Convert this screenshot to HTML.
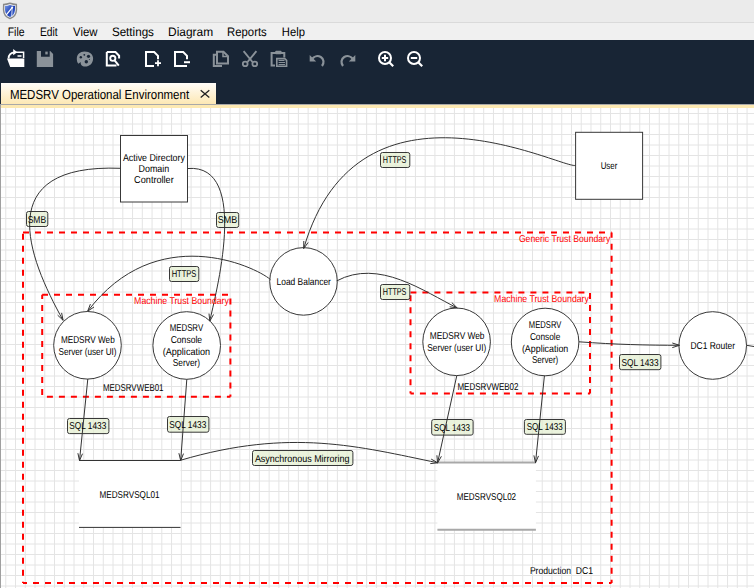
<!DOCTYPE html>
<html><head><meta charset="utf-8">
<style>
html,body{margin:0;padding:0;width:754px;height:588px;overflow:hidden;background:#fff;font-family:"Liberation Sans", sans-serif;}
.abs{position:absolute;}
#title{left:0;top:0;width:754px;height:22px;background:#ebebeb;}
#sep{left:0;top:22px;width:754px;height:1px;background:#dadada;}
#menu{left:0;top:23px;width:754px;height:17px;background:#f0f0f0;}
.mi{position:absolute;top:24px;font-size:12.2px;color:#000;line-height:14px;white-space:nowrap;}
#tool{left:0;top:40px;width:754px;height:64px;background:#182535;}
#tab{left:1px;top:83px;width:215px;height:21px;background:linear-gradient(#fffdf9,#fde8b4);}
#tabtxt{left:9.5px;top:86px;font-size:13.3px;color:#000;white-space:nowrap;line-height:16px;}
#gl{left:0;top:104px;width:754px;height:1px;background:#a9a9a9;}
#yb{left:0;top:105px;width:754px;height:3px;background:#fde9b2;}
#lb{left:0;top:104px;width:1px;height:484px;background:#a0a0a0;}
svg text{font-family:"Liberation Sans", sans-serif;text-rendering:geometricPrecision;}
.t{font-size:10px;fill:#000;}
.mt{font-size:12.3px;fill:#000;}
.tt{font-size:13.2px;fill:#000;}
.tr{font-size:10px;fill:#ff0000;}
.tb{fill:none;stroke:#ff0000;stroke-width:2;stroke-dasharray:6 6;}
.ln{fill:none;stroke:#333;stroke-width:1;}
.ar{fill:none;stroke:#333;stroke-width:1;}
.ent{fill:#fff;stroke:#383838;stroke-width:1;}
.lb{fill:rgba(226,238,206,0.7);stroke:#383838;stroke-width:1;}
</style></head><body>
<div id="title" class="abs"></div>
<svg class="abs" style="left:0;top:0" width="22" height="22" viewBox="0 0 22 22">
<defs><linearGradient id="shg" x1="0" y1="0" x2="1" y2="1"><stop offset="0" stop-color="#7a9be8"/><stop offset="0.55" stop-color="#1d3fb5"/><stop offset="1" stop-color="#5a7fd8"/></linearGradient></defs>
<path d="M10 3.2 C12 3.9 14.3 4.4 16.3 4.4 L16.4 10 C16.2 14.3 13.5 17.4 10 18.5 C6.5 17.4 3.8 14.3 3.6 10 L3.7 4.4 C5.7 4.4 8 3.9 10 3.2 Z" fill="#fff" stroke="#8a8a8a" stroke-width="1.5"/>
<path d="M10 4.9 C11.8 5.5 13.6 5.8 15 5.8 L15 10 C14.8 13.5 12.8 16 10 17 C7.2 16 5.2 13.5 5 10 L5 5.8 C6.4 5.8 8.2 5.5 10 4.9 Z" fill="url(#shg)"/>
<path d="M6.3 14.8 L12.4 7.4" stroke="#fff" stroke-width="1.3"/><path d="M12.2 7.8 L11.7 16.3" stroke="#dfe6f5" stroke-width="0.9"/>
<circle cx="12.2" cy="7.6" r="1" fill="#fff"/>
</svg>
<div id="sep" class="abs"></div>
<div id="menu" class="abs"></div>
<div id="tool" class="abs"></div>
<svg class="abs" style="left:0;top:0" width="754" height="104">
<!-- open -->
<path d="M7 58.6 H24.3 V67 H10.2 Z" fill="#fff"/>
<path d="M16 52.2 H23.6 V58" stroke="#fff" stroke-width="1.5" fill="none"/>
<path d="M17.5 56 H21.5" stroke="#fff" stroke-width="1.5"/>
<path d="M8.6 58.5 C8.6 54.5 10.5 52.5 15 52.3" stroke="#fff" stroke-width="1.8" fill="none"/>
<path d="M13.2 49 L17.2 52.3 L13.2 55.3 Z" fill="#fff"/>
<!-- save -->
<path d="M36.8 51 H50.2 L53.1 54 V67 H36.8 Z M41 51 V56.7 H49.7 V51 Z" fill="#8a9299" fill-rule="evenodd"/>
<rect x="45.3" y="51.6" width="2.4" height="2.8" fill="#8a9299"/>
<!-- palette -->
<path d="M84.5 51.5 C90 51.5 93.1 54.5 93.1 58.5 C93.1 63.5 89.5 66.6 85 66.6 C82 66.6 80.2 64.5 80.8 62 L78.3 63.8 C77 62.3 76.8 60 76.8 58.8 C76.8 54.5 80 51.5 84.5 51.5 Z" fill="#8a9299"/>
<circle cx="80.8" cy="57.2" r="1.2" fill="#182535"/><circle cx="84.3" cy="54.8" r="0.9" fill="#182535"/>
<circle cx="88.5" cy="56.3" r="1.6" fill="#182535"/><circle cx="86.3" cy="61.8" r="1.7" fill="#182535"/>
<circle cx="89.4" cy="59.5" r="0.5" fill="#182535"/>
<!-- report -->
<path d="M106.8 52.1 H115.5 L119.1 55.7 V58.5 M106.8 52.1 V65.6 H116.5" stroke="#fff" stroke-width="2" fill="none"/>
<circle cx="112.8" cy="58.3" r="2.6" stroke="#fff" stroke-width="1.9" fill="none"/>
<path d="M114.8 60.6 L118.8 65.6" stroke="#fff" stroke-width="2"/>
<!-- new -->
<path d="M154 66 H146 V52 H154.2 L158 55.8 V59.3" stroke="#fff" stroke-width="2" fill="none"/>
<path d="M155 63.2 H161 M158 60.3 V66.3" stroke="#fff" stroke-width="1.8"/>
<!-- remove -->
<path d="M187 66 H175 V52 H183.2 L187 55.8 V59.2" stroke="#fff" stroke-width="2" fill="none"/>
<path d="M184 62.2 H190" stroke="#fff" stroke-width="2"/>
<!-- copy -->
<path d="M222 66 H213.8 V54.8 H216.5" stroke="#8a9299" stroke-width="2" fill="none"/>
<path d="M217 51.7 H223.5 L228 56.2 V63.5 H217 Z" stroke="#8a9299" stroke-width="2" fill="none"/>
<path d="M223 52 V56.5 H227.5" stroke="#8a9299" stroke-width="1.5" fill="none"/>
<!-- cut -->
<path d="M243.6 51.2 L252.5 62 M256.4 51.2 L247.5 62" stroke="#8a9299" stroke-width="1.9"/>
<ellipse cx="245.2" cy="63.9" rx="2.4" ry="2.2" stroke="#8a9299" stroke-width="1.8" fill="none"/>
<ellipse cx="254.8" cy="63.9" rx="2.4" ry="2.2" stroke="#8a9299" stroke-width="1.8" fill="none"/>
<!-- paste -->
<path d="M275 65.6 H271.6 V53 H284.3 V57.5" stroke="#8a9299" stroke-width="2" fill="none"/>
<rect x="275.3" y="50.8" width="6.2" height="3.4" rx="0.8" fill="#8a9299"/>
<path d="M276.8 58.6 H284.8 L286.6 60.4 V66.2 H276.8 Z" stroke="#8a9299" stroke-width="1.6" fill="#182535"/>
<path d="M278.6 60.5 H284.5 M278.6 62.5 H285 M278.6 64.5 H285" stroke="#8a9299" stroke-width="1.1"/>
<!-- undo -->
<path d="M312.5 58.5 C314.5 56 318 55.5 320.8 57 C324 59 324.3 63 322 66" stroke="#8a9299" stroke-width="2.2" fill="none"/>
<path d="M309.7 54.9 L309.7 61.5 L316.2 61.5 Z" fill="#8a9299"/>
<!-- redo -->
<path d="M352.5 58.5 C350.5 56 347 55.5 344.2 57 C341 59 340.7 63 343 66" stroke="#8a9299" stroke-width="2.2" fill="none"/>
<path d="M355.3 54.9 L355.3 61.5 L348.8 61.5 Z" fill="#8a9299"/>
<!-- zoom in -->
<circle cx="385" cy="58" r="6" stroke="#fff" stroke-width="2" fill="none"/>
<path d="M389.5 62.5 L393.2 66.2" stroke="#fff" stroke-width="2.2"/>
<path d="M381.8 58 H388.2 M385 54.8 V61.2" stroke="#fff" stroke-width="2"/>
<!-- zoom out -->
<circle cx="414" cy="58" r="6" stroke="#fff" stroke-width="2" fill="none"/>
<path d="M418.5 62.5 L422.2 66.2" stroke="#fff" stroke-width="2.2"/>
<path d="M410.8 58 H417.2" stroke="#fff" stroke-width="2"/>
</svg>
<div id="tab" class="abs"></div>
<svg class="abs" style="left:0;top:0" width="754" height="104"><text id="mFile" x="7.67" y="35.8" textLength="16.88" lengthAdjust="spacingAndGlyphs" class="mt">File</text><text id="mEdit" x="40.03" y="35.8" textLength="17.72" lengthAdjust="spacingAndGlyphs" class="mt">Edit</text><text id="mView" x="73.10" y="35.8" textLength="24.43" lengthAdjust="spacingAndGlyphs" class="mt">View</text><text id="mSet" x="111.89" y="35.8" textLength="42.06" lengthAdjust="spacingAndGlyphs" class="mt">Settings</text><text id="mDia" x="168.10" y="35.8" textLength="45.01" lengthAdjust="spacingAndGlyphs" class="mt">Diagram</text><text id="mRep" x="227.11" y="35.8" textLength="39.63" lengthAdjust="spacingAndGlyphs" class="mt">Reports</text><text id="mHelp" x="281.84" y="35.8" textLength="23.10" lengthAdjust="spacingAndGlyphs" class="mt">Help</text><text id="mTab" x="9.90" y="98.9" textLength="179.21" lengthAdjust="spacingAndGlyphs" class="tt">MEDSRV Operational Environment</text></svg>
<svg class="abs" style="left:0;top:0" width="230" height="104"><path d="M200.7 90.3 L209.3 97.5 M209.3 90.3 L200.7 97.5" stroke="#222" stroke-width="1.3"/></svg>
<div id="gl" class="abs"></div>
<div id="yb" class="abs"></div>
<svg class="abs" style="left:0;top:0" width="754" height="588"><rect x="0" y="108" width="754" height="480" fill="#fff"/>
<path d="M5.75 108V588M15.50 108V588M25.26 108V588M35.01 108V588M44.77 108V588M54.52 108V588M64.27 108V588M74.03 108V588M83.78 108V588M93.54 108V588M103.29 108V588M113.04 108V588M122.80 108V588M132.55 108V588M142.31 108V588M152.06 108V588M161.81 108V588M171.57 108V588M181.32 108V588M191.08 108V588M200.83 108V588M210.58 108V588M220.34 108V588M230.09 108V588M239.85 108V588M249.60 108V588M259.35 108V588M269.11 108V588M278.86 108V588M288.62 108V588M298.37 108V588M308.12 108V588M317.88 108V588M327.63 108V588M337.39 108V588M347.14 108V588M356.89 108V588M366.65 108V588M376.40 108V588M386.16 108V588M395.91 108V588M405.66 108V588M415.42 108V588M425.17 108V588M434.93 108V588M444.68 108V588M454.43 108V588M464.19 108V588M473.94 108V588M483.70 108V588M493.45 108V588M503.20 108V588M512.96 108V588M522.71 108V588M532.47 108V588M542.22 108V588M551.97 108V588M561.73 108V588M571.48 108V588M581.24 108V588M590.99 108V588M600.74 108V588M610.50 108V588M620.25 108V588M630.01 108V588M639.76 108V588M649.51 108V588M659.27 108V588M669.02 108V588M678.78 108V588M688.53 108V588M698.28 108V588M708.04 108V588M717.79 108V588M727.55 108V588M737.30 108V588M747.05 108V588M1 113.50H754M1 124.00H754M1 134.50H754M1 145.00H754M1 155.50H754M1 166.00H754M1 176.50H754M1 187.00H754M1 197.50H754M1 208.00H754M1 218.50H754M1 229.00H754M1 239.50H754M1 250.00H754M1 260.50H754M1 271.00H754M1 281.50H754M1 292.00H754M1 302.50H754M1 313.00H754M1 323.50H754M1 334.00H754M1 344.50H754M1 355.00H754M1 365.50H754M1 376.00H754M1 386.50H754M1 397.00H754M1 407.50H754M1 418.00H754M1 428.50H754M1 439.00H754M1 449.50H754M1 460.00H754M1 470.50H754M1 481.00H754M1 491.50H754M1 502.00H754M1 512.50H754M1 523.00H754M1 533.50H754M1 544.00H754M1 554.50H754M1 565.00H754M1 575.50H754M1 586.00H754" stroke="#e4e4e4" stroke-width="1" fill="none"/>
<path d="M23 232.5 H611.6" class="tb" stroke-dashoffset="0.00"/><path d="M23 232.5 V583" class="tb" stroke-dashoffset="10.70"/><path d="M611.6 232.5 V583" class="tb" stroke-dashoffset="0.70"/><path d="M23 583 H611.6" class="tb" stroke-dashoffset="2.00"/>
<path d="M42.2 294.7 H230.4" class="tb" stroke-dashoffset="0.20"/><path d="M42.2 294.7 V396.7" class="tb" stroke-dashoffset="1.70"/><path d="M230.4 294.7 V396.7" class="tb" stroke-dashoffset="8.30"/><path d="M42.2 396.7 H230.4" class="tb" stroke-dashoffset="7.30"/>
<path d="M410.5 292.4 H590" class="tb" stroke-dashoffset="0.10"/><path d="M410.5 292.4 V393.6" class="tb" stroke-dashoffset="9.10"/><path d="M590 292.4 V393.6" class="tb" stroke-dashoffset="11.30"/><path d="M410.5 393.6 H590" class="tb" stroke-dashoffset="2.60"/>
<rect x="79" y="460.5" width="101.5" height="67" fill="#fff"/>
<path d="M79 460.5 H180.5 M79 527.4 H180.5" class="ln"/>
<rect x="437.4" y="462.4" width="98.5" height="67.3" fill="#fff"/>
<path d="M437.4 462.4 H535.9 M437.4 529.7 H535.9" stroke="#a8a8a8" stroke-width="2" fill="none"/>
<rect x="120.5" y="135.5" width="67" height="66.5" class="ent"/>
<rect x="575.6" y="132.3" width="67" height="67" class="ent"/>
<circle cx="303.5" cy="281.4" r="33.8" class="ent"/>
<circle cx="87.5" cy="345.3" r="33.8" class="ent"/>
<circle cx="186.7" cy="345.5" r="33.8" class="ent"/>
<circle cx="456.6" cy="341.8" r="33.8" class="ent"/>
<circle cx="545.1" cy="342" r="33.8" class="ent"/>
<circle cx="712.7" cy="345.5" r="33.8" class="ent"/>
<rect x="26.5" y="211.5" width="21.3" height="15.0" rx="2" class="lb"/>
<rect x="216.5" y="212.5" width="22.2" height="15.0" rx="2" class="lb"/>
<rect x="380.5" y="152.5" width="29.3" height="15.0" rx="2" class="lb"/>
<rect x="169.5" y="266.5" width="29.3" height="15.0" rx="2" class="lb"/>
<rect x="380.5" y="284.5" width="29.3" height="15.0" rx="2" class="lb"/>
<rect x="67.5" y="418.5" width="41.4" height="15.1" rx="2" class="lb"/>
<rect x="167.5" y="416.5" width="41.4" height="15.7" rx="2" class="lb"/>
<rect x="252.5" y="450.5" width="100.4" height="15.0" rx="2" class="lb"/>
<rect x="431.7" y="419.5" width="41.4" height="15.6" rx="2" class="lb"/>
<rect x="524.4" y="419.5" width="41.0" height="14.8" rx="2" class="lb"/>
<rect x="619.5" y="354.5" width="41.4" height="15.2" rx="2" class="lb"/>
<path d="M120.5 168.3 C-9.0 163.4 27.5 256.6 63.1 320.3" class="ln"/>
<path d="M57.6 315.1 L63.1 320.3 L61.6 312.9" class="ar"/>
<path d="M187.7 168.5 C251.5 163.3 214.4 298.4 209.8 321.1" class="ln"/>
<path d="M209.0 313.6 L209.8 321.1 L213.5 314.5" class="ar"/>
<path d="M575.7 165.2 C566.9 171.5 358.7 59.0 303.7 248.6" class="ln"/>
<path d="M303.8 241.0 L303.7 248.6 L308.1 242.5" class="ar"/>
<path d="M270.4 279.5 C254.4 265.9 156.0 220.8 87.7 311.2" class="ln"/>
<path d="M90.4 304.1 L87.7 311.2 L94.0 307.0" class="ar"/>
<path d="M336.5 281.0 C378.9 258.1 424.4 291.9 457.2 307.9" class="ln"/>
<path d="M449.7 306.8 L457.2 307.9 L451.8 302.6" class="ar"/>
<path d="M180.4 460.3 C291.0 427.7 359.2 446.7 437.8 462.8" class="ln"/>
<path d="M430.3 463.6 L437.8 462.8 L431.2 459.1" class="ar"/>
<path d="M579.0 341.8 C615 344.5 647 345.3 679.5 345.3" class="ln"/>
<path d="M672.3 347.6 L679.5 345.3 L672.3 343.0" class="ar"/>
<path d="M87.8 378.9 L79.5 460.6" class="ln"/>
<path d="M77.9 453.2 L79.5 460.6 L82.5 453.7" class="ar"/>
<path d="M186.8 379.3 L180.7 460.6" class="ln"/>
<path d="M178.9 453.2 L180.7 460.6 L183.5 453.6" class="ar"/>
<path d="M456.8 375.6 L437.6 462.8" class="ln"/>
<path d="M436.9 455.3 L437.6 462.8 L441.4 456.3" class="ar"/>
<path d="M544.4 375.9 L535.5 462.8" class="ln"/>
<path d="M533.9 455.4 L535.5 462.8 L538.5 455.9" class="ar"/>
<path d="M746.5 345.3 L760 347.5" class="ln"/>
<text id="l1" x="27.71" y="222.9" textLength="18.42" lengthAdjust="spacingAndGlyphs" class="t">SMB</text>
<text id="l2" x="217.70" y="223.4" textLength="19.42" lengthAdjust="spacingAndGlyphs" class="t">SMB</text>
<text id="l3" x="382.87" y="162.9" textLength="23.49" lengthAdjust="spacingAndGlyphs" class="t">HTTPS</text>
<text id="l4" x="171.66" y="276.9" textLength="24.67" lengthAdjust="spacingAndGlyphs" class="t">HTTPS</text>
<text id="l5" x="382.87" y="294.9" textLength="23.49" lengthAdjust="spacingAndGlyphs" class="t">HTTPS</text>
<text id="l6" x="69.28" y="429.3" textLength="37.05" lengthAdjust="spacingAndGlyphs" class="t">SQL 1433</text>
<text id="l7" x="169.28" y="427.6" textLength="37.05" lengthAdjust="spacingAndGlyphs" class="t">SQL 1433</text>
<text id="l8" x="254.90" y="461.8" textLength="94.61" lengthAdjust="spacingAndGlyphs" class="t">Asynchronous Mirroring</text>
<text id="l9" x="433.87" y="430.5" textLength="36.08" lengthAdjust="spacingAndGlyphs" class="t">SQL 1433</text>
<text id="l10" x="526.66" y="429.8" textLength="36.08" lengthAdjust="spacingAndGlyphs" class="t">SQL 1433</text>
<text id="l11" x="621.47" y="365.5" textLength="37.05" lengthAdjust="spacingAndGlyphs" class="t">SQL 1433</text>
<text id="ad1" x="122.89" y="160.9" textLength="62.02" lengthAdjust="spacingAndGlyphs" class="t">Active Directory</text>
<text id="ad2" x="138.49" y="171.9" textLength="30.81" lengthAdjust="spacingAndGlyphs" class="t">Domain</text>
<text id="ad3" x="134.11" y="183.3" textLength="39.63" lengthAdjust="spacingAndGlyphs" class="t">Controller</text>
<text id="user" x="600.67" y="168.9" textLength="16.69" lengthAdjust="spacingAndGlyphs" class="t">User</text>
<text id="lb" x="276.49" y="284.7" textLength="54.45" lengthAdjust="spacingAndGlyphs" class="t">Load Balancer</text>
<text id="w1a" x="60.88" y="342.9" textLength="53.85" lengthAdjust="spacingAndGlyphs" class="t">MEDSRV Web</text>
<text id="w1b" x="58.50" y="354.8" textLength="58.02" lengthAdjust="spacingAndGlyphs" class="t">Server (user UI)</text>
<text id="c1a" x="169.68" y="330.7" textLength="33.48" lengthAdjust="spacingAndGlyphs" class="t">MEDSRV</text>
<text id="c1b" x="170.68" y="342.7" textLength="31.44" lengthAdjust="spacingAndGlyphs" class="t">Console</text>
<text id="c1c" x="162.69" y="354.6" textLength="47.43" lengthAdjust="spacingAndGlyphs" class="t">(Application</text>
<text id="c1d" x="172.71" y="366.3" textLength="27.42" lengthAdjust="spacingAndGlyphs" class="t">Server)</text>
<text id="w2a" x="429.69" y="338.8" textLength="54.82" lengthAdjust="spacingAndGlyphs" class="t">MEDSRV Web</text>
<text id="w2b" x="427.31" y="350.9" textLength="59.00" lengthAdjust="spacingAndGlyphs" class="t">Server (user UI)</text>
<text id="c2a" x="528.87" y="327.6" textLength="32.47" lengthAdjust="spacingAndGlyphs" class="t">MEDSRV</text>
<text id="c2b" x="529.89" y="339.7" textLength="30.43" lengthAdjust="spacingAndGlyphs" class="t">Console</text>
<text id="c2c" x="521.90" y="351.5" textLength="46.42" lengthAdjust="spacingAndGlyphs" class="t">(Application</text>
<text id="c2d" x="531.89" y="363.2" textLength="26.44" lengthAdjust="spacingAndGlyphs" class="t">Server)</text>
<text id="dc1" x="690.47" y="348.8" textLength="44.64" lengthAdjust="spacingAndGlyphs" class="t">DC1 Router</text>
<text id="sq1" x="99.47" y="497.6" textLength="60.05" lengthAdjust="spacingAndGlyphs" class="t">MEDSRVSQL01</text>
<text id="sq2" x="456.69" y="500.0" textLength="59.41" lengthAdjust="spacingAndGlyphs" class="t">MEDSRVSQL02</text>
<text id="web1" x="102.90" y="390.9" textLength="60.64" lengthAdjust="spacingAndGlyphs" class="t">MEDSRVWEB01</text>
<text id="web2" x="457.48" y="389.5" textLength="61.03" lengthAdjust="spacingAndGlyphs" class="t">MEDSRVWEB02</text>
<text id="prod" x="529.89" y="573.8" textLength="63.22" lengthAdjust="spacingAndGlyphs" class="t">Production&#160; DC1</text>
<text id="gtb" x="518.89" y="241.8" textLength="91.44" lengthAdjust="spacingAndGlyphs" class="tr">Generic Trust Boundary</text>
<text id="btb1" x="134.10" y="303.6" textLength="94.81" lengthAdjust="spacingAndGlyphs" class="tr">Machine Trust Boundary</text>
<text id="btb2" x="494.10" y="302.0" textLength="94.81" lengthAdjust="spacingAndGlyphs" class="tr">Machine Trust Boundary</text></svg>
<div id="lb" class="abs"></div>
</body></html>
